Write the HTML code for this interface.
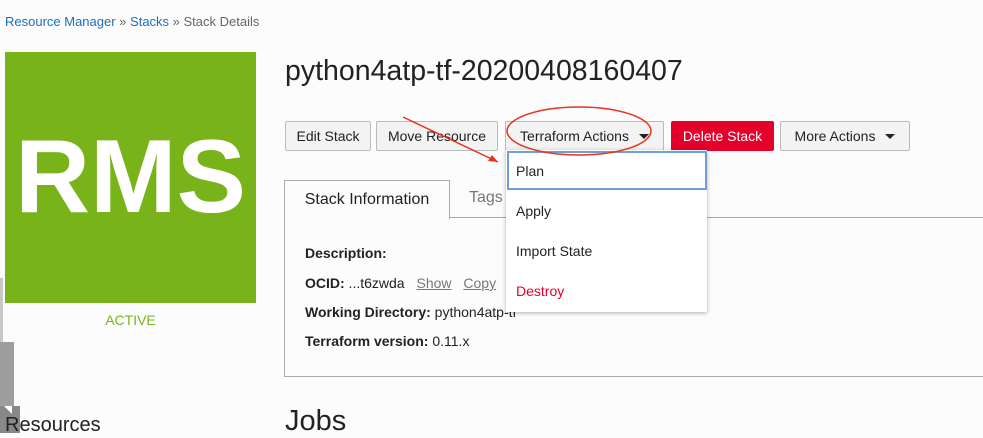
<!DOCTYPE html>
<html><head><meta charset="utf-8"><style>
body{margin:0;width:983px;height:433px;overflow:hidden;background:#fcfcfc;font-family:"Liberation Sans",sans-serif;position:relative;color:#222}
.a{position:absolute;white-space:nowrap}
.btn{position:absolute;top:121px;height:28px;border:1px solid #bbb;border-radius:2px;background:#f3f3f3;font-size:14px;line-height:28px;text-align:center;color:#222}
.car{display:inline-block;border-left:5px solid transparent;border-right:5px solid transparent;border-top:5px solid #222;margin-left:10px;vertical-align:2px}
.lb{font-weight:bold;font-size:14px}
.u{color:#777;text-decoration:underline;margin-left:8px}
.it{position:absolute;left:10px;font-size:14px}
</style></head><body>
<div class="a" style="left:5px;top:14px;font-size:13px;color:#666"><span style="color:#1e6fb8">Resource Manager</span> » <span style="color:#1e6fb8">Stacks</span> » Stack Details</div>
<div class="a" style="left:5px;top:52px;width:251px;height:251px;background:#78b31a;color:#fff;font-weight:bold;font-size:104px;line-height:251px;text-align:center">RMS</div>
<div class="a" style="left:5px;top:312px;width:251px;text-align:center;color:#7ab51d;font-size:14px">ACTIVE</div>
<div class="a" style="left:0;top:278px;width:3px;height:64px;background:#c8c8c8"></div>
<div class="a" style="left:0;top:342px;width:14px;height:64px;background:#9e9e9e"></div>
<div class="a" style="left:0;top:406px;width:20px;height:27px;background:#888"></div>
<div class="a" style="left:4px;top:406px;width:0;height:0;border-top:8px solid #fff;border-left:8px solid transparent"></div>
<div class="a" style="left:5px;top:414px;font-size:20px;color:#222">Resources</div>
<div class="a" style="left:285px;top:55px;font-size:28.5px;color:#222">python4atp-tf-20200408160407</div>
<div class="btn" style="left:285px;width:84px">Edit Stack</div>
<div class="btn" style="left:376px;width:120px">Move Resource</div>
<div class="btn" style="left:505px;width:157px">Terraform Actions<span class="car"></span></div>
<div class="btn" style="left:671px;width:101px;background:#e4002b;border-color:#e4002b;color:#fff">Delete Stack</div>
<div class="btn" style="left:780px;width:128px">More Actions<span class="car"></span></div>
<div class="a" style="left:284px;top:217px;width:698px;height:159px;border:1px solid #aaa;border-top:none"></div>
<div class="a" style="left:449px;top:217px;width:534px;height:1px;background:#aaa"></div>
<div class="a" style="left:284px;top:180px;width:164px;height:38px;border:1px solid #aaa;border-bottom:none;background:#fcfcfc;font-size:16px;line-height:38px;text-align:center">Stack Information</div>
<div class="a" style="left:469px;top:189px;font-size:16px;color:#777">Tags</div>
<div class="a" style="left:305px;top:245px"><span class="lb">Description:</span></div>
<div class="a" style="left:305px;top:275px;font-size:14px"><span class="lb">OCID:</span> ...t6zwda <span class="u">Show</span> <span class="u">Copy</span></div>
<div class="a" style="left:305px;top:304px;font-size:14px"><span class="lb">Working Directory:</span> python4atp-tf</div>
<div class="a" style="left:305px;top:333px;font-size:14px"><span class="lb">Terraform version:</span> 0.11.x</div>
<div class="a" style="left:285px;top:405px;font-size:29px">Jobs</div>
<div class="a" style="left:506px;top:150px;width:201px;height:162px;background:#fff;box-shadow:0 1px 4px rgba(0,0,0,.3)">
<div class="a" style="left:1px;top:1px;width:196px;height:35px;border:2px solid #6e9fdb"></div>
<div class="it" style="top:13px">Plan</div>
<div class="it" style="top:53px">Apply</div>
<div class="it" style="top:93px">Import State</div>
<div class="it" style="top:133px;color:#e4002b">Destroy</div>
</div>
<svg class="a" style="left:0;top:0" width="983" height="433"><ellipse cx="579" cy="131" rx="72" ry="24" fill="none" stroke="#e8331c" stroke-width="1.5"/><line x1="403" y1="117" x2="498" y2="162" stroke="#e8331c" stroke-width="1.5"/><path d="M498 162 L488 161 L492 155 Z" fill="#e8331c"/></svg>
</body></html>
